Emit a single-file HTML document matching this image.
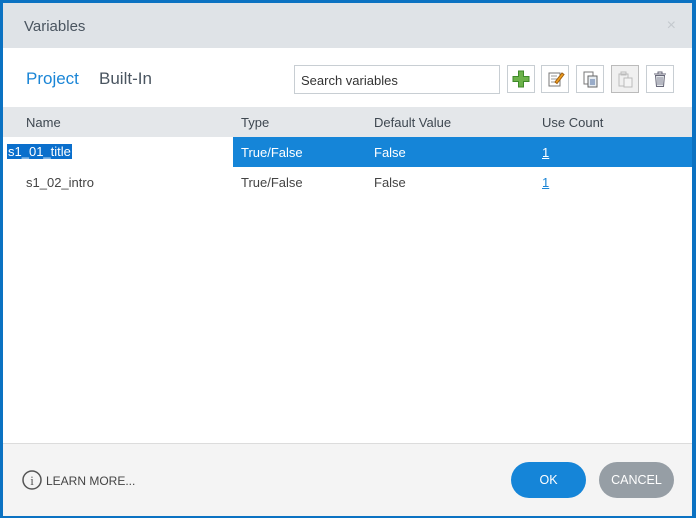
<!DOCTYPE html><html><head><style>
body{margin:0;width:696px;height:518px;background:#0b72c2;font-family:"Liberation Sans",sans-serif;position:relative;overflow:hidden}
.d{position:absolute;left:3px;top:3px;width:689px;height:512px;background:#fff}
.t{position:absolute;left:0;top:0;width:689px;height:45px;background:#dfe3e7;color:#4a5560;font-size:15px}
.a{position:absolute;white-space:nowrap}
.ib{position:absolute;top:62px;width:28px;height:28px;border:1px solid #c8ced3;box-sizing:border-box;background:#fff}
.h{position:absolute;left:0;top:104px;width:689px;height:30px;background:#e4e7ea;font-size:13px;color:#3e4750}
.f{position:absolute;left:0;top:440px;width:689px;height:72px;background:#f4f4f4;border-top:1px solid #dcdcdc}
.btn{position:absolute;top:18px;width:75px;height:36px;border-radius:18px;color:#fff;font-size:12.5px;text-align:center;line-height:36px}
</style></head><body><div class="d">
<div class="t"><span class="a" style="left:21px;top:15px">Variables</span><span class="a" style="right:16px;top:14px;color:#c4c9ce;font-size:16px">×</span></div>
<span class="a" style="left:23px;top:66px;font-size:17px;color:#1a85d6">Project</span>
<span class="a" style="left:96px;top:66px;font-size:17px;color:#4a5560">Built-In</span>
<div class="a" style="left:291px;top:62px;width:206px;height:29px;border:1px solid #c8ced3;box-sizing:border-box;font-size:13px;color:#333;padding:7px 0 0 6px">Search variables</div>
<div class="ib" style="left:504px"><svg width="26" height="26"><path d="M10.5 5h5v5.5H21v5h-5.5V21h-5v-5.5H5v-5h5.5z" fill="#6cb24a" stroke="#3f8a2a"/></svg></div>
<div class="ib" style="left:538px"><svg width="26" height="26"><rect x="7" y="7" width="11" height="13" fill="#fff" stroke="#777"/><path d="M9 10h6M9 13h6M9 16h5" stroke="#999"/><path d="M13 16l7-9 2 1.5-7 9z" fill="#f0a020" stroke="#a06010"/></svg></div>
<div class="ib" style="left:573px"><svg width="26" height="26"><rect x="7" y="6" width="9" height="12" fill="#fff" stroke="#777"/><rect x="11" y="10" width="9" height="11" fill="#e8edf2" stroke="#666"/><path d="M13 14h5M13 16h5M13 18h5" stroke="#4a6ca0"/></svg></div>
<div class="ib" style="left:608px;background:#f0f0f0;border-color:#bbb"><svg width="26" height="26"><rect x="7" y="8" width="9" height="12" fill="none" stroke="#bbb"/><rect x="9" y="6" width="5" height="3" fill="none" stroke="#bbb"/><rect x="12" y="12" width="8" height="9" fill="#f4f4f4" stroke="#bbb"/></svg></div>
<div class="ib" style="left:643px"><svg width="26" height="26"><path d="M7 8h12M11 8V6h4v2" stroke="#667" fill="none"/><path d="M8.5 9.5h9l-1 11h-7z" fill="#e4e8eb" stroke="#667"/><path d="M11 11v8M13 11v8M15 11v8" stroke="#889"/></svg></div>
<div class="h"><span class="a" style="left:23px;top:8px">Name</span><span class="a" style="left:238px;top:8px">Type</span><span class="a" style="left:371px;top:8px">Default Value</span><span class="a" style="left:539px;top:8px">Use Count</span></div>
<div class="a" style="left:230px;top:134px;width:459px;height:30px;background:#1585d8"></div>
<div style="font-size:13px">
<span class="a" style="left:4px;top:141px;background:#0a6fcc;color:#fff;padding:0 1px">s1_01_title</span>
<span class="a" style="left:238px;top:142px;color:#fff">True/False</span>
<span class="a" style="left:371px;top:142px;color:#fff">False</span>
<span class="a" style="left:539px;top:142px;color:#fff;text-decoration:underline">1</span>
<span class="a" style="left:23px;top:172px;color:#444">s1_02_intro</span>
<span class="a" style="left:238px;top:172px;color:#444">True/False</span>
<span class="a" style="left:371px;top:172px;color:#444">False</span>
<span class="a" style="left:539px;top:172px;color:#1a85d6;text-decoration:underline">1</span>
</div>
<div class="f">
<svg class="a" style="left:18px;top:25px" width="22" height="22"><circle cx="11" cy="11" r="9" fill="none" stroke="#555" stroke-width="1.5"/><text x="11" y="16" text-anchor="middle" font-size="13" fill="#555" font-family="Liberation Serif">i</text></svg>
<span class="a" style="left:43px;top:30px;font-size:12px;color:#444">LEARN MORE...</span>
<div class="btn" style="left:508px;background:#1585d8">OK</div>
<div class="btn" style="left:596px;background:#969ea5">CANCEL</div>
</div>
</div></body></html>
